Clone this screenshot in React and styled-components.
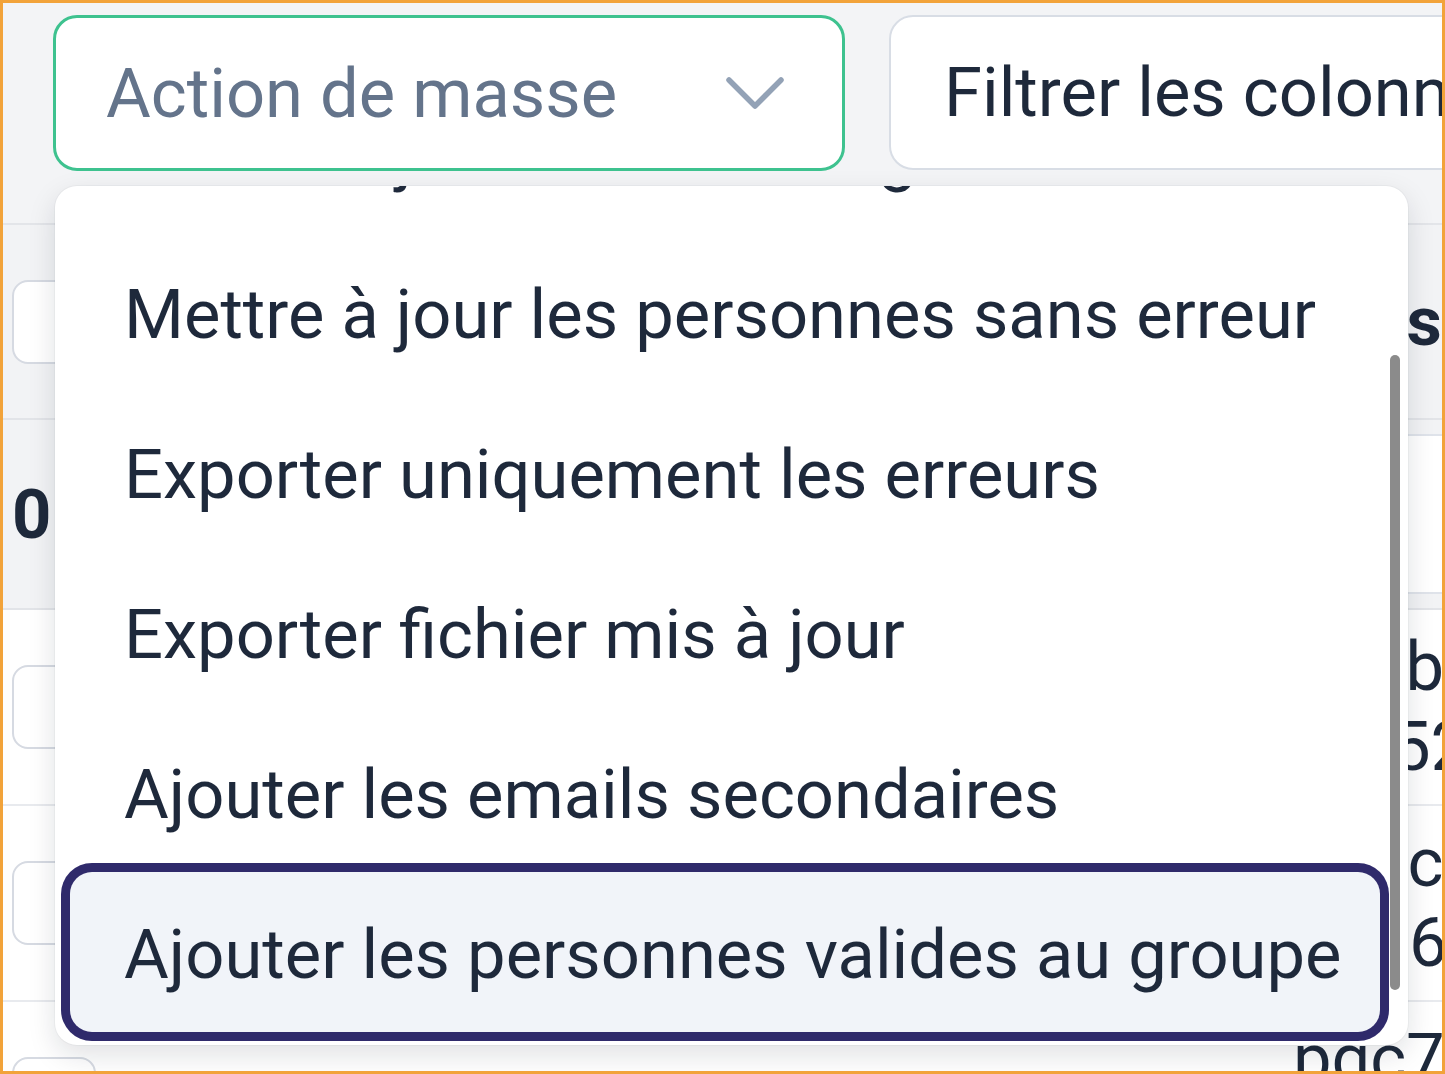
import React, { useLayoutEffect, useRef } from 'react';
import styled, { createGlobalStyle } from 'styled-components';

const GlobalStyle = createGlobalStyle`
  html, body {
    margin: 0;
    padding: 0;
  }
  body {
    font-family: Roboto, "Liberation Sans", sans-serif;
    background: #ffffff;
  }
`;

const Frame = styled.div`
  position: relative;
  width: 1445px;
  height: 1074px;
  box-sizing: border-box;
  border: 3px solid #f2a33a;
  background: #f3f4f6;
  overflow: hidden;
`;

const Toolbar = styled.div`
  display: flex;
  align-items: flex-start;
  gap: 44px;
  height: 222px;
  box-sizing: border-box;
  padding: 12px 0 0 50px;
  border-bottom: 2px solid #e3e5e9;
`;

const SelectBox = styled.div`
  flex: 0 0 auto;
  width: 792px;
  height: 156px;
  box-sizing: border-box;
  display: flex;
  align-items: center;
  justify-content: space-between;
  padding: 0 56px 0 50px;
  background: #ffffff;
  border: 3px solid #3ec28f;
  border-radius: 24px;
  font-size: 68.7px;
  color: #64748b;
  white-space: nowrap;
`;

const FilterBox = styled.div`
  flex: 0 0 auto;
  width: 700px;
  height: 155px;
  box-sizing: border-box;
  display: flex;
  align-items: center;
  padding-left: 53px;
  background: #ffffff;
  border: 2px solid #d8dde5;
  border-radius: 24px;
  font-size: 68.7px;
  color: #1e293b;
  white-space: nowrap;
  overflow: hidden;
`;

const Table = styled.div`
  display: grid;
  grid-template-columns: 110px 1162px 400px;
  grid-template-rows: 195px 190px;
  grid-auto-rows: 196px;
`;

const Cell = styled.div`
  display: flex;
  align-items: center;
  box-sizing: border-box;
  background: ${(p) => (p.$head ? '#f2f3f5' : '#ffffff')};
  border-bottom: 2px solid ${(p) => (p.$head ? '#e2e4e8' : '#e8eaee')};
  padding-left: ${(p) => p.$pad || 0}px;
  font-size: 68.7px;
  color: #1e293b;
  white-space: pre;
  overflow: hidden;
`;

const Checkbox = styled.span`
  display: block;
  width: 84px;
  height: 84px;
  box-sizing: border-box;
  background: #ffffff;
  border: 2px solid #d6dae2;
  border-radius: 16px;
`;

const BoldText = styled.span`
  font-weight: 700;
  color: #1e293b;
`;

const FilterInput = styled.span`
  display: block;
  width: 100%;
  height: 156px;
  background: #ffffff;
  border-top: 2px solid #dfe3ea;
  border-bottom: 2px solid #dfe3ea;
`;

const IdText = styled.span`
  line-height: 80px;
`;

const Menu = styled.div`
  position: absolute;
  left: 52px;
  top: 183px;
  width: 1353px;
  height: 859px;
  background: #ffffff;
  border-radius: 22px;
  box-shadow: 0 10px 28px rgba(15, 23, 42, 0.13), 0 0 0 1px rgba(15, 23, 42, 0.03);
  overflow: hidden;
`;

const MenuScroll = styled.div`
  height: 100%;
  overflow-y: auto;
  scrollbar-width: none;
  &::-webkit-scrollbar {
    display: none;
  }
`;

const MenuList = styled.div`
  display: flex;
  flex-direction: column;
  padding: 13px 28px 13px 15px;
`;

const MenuItem = styled.div`
  flex: 0 0 auto;
  height: 160px;
  box-sizing: border-box;
  display: flex;
  align-items: center;
  padding: 5px 0 0 54px;
  border-radius: 22px;
  font-size: 68.7px;
  color: #1e293b;
  white-space: nowrap;
  background: ${(p) => (p.$active ? '#f1f4f9' : 'transparent')};
  box-shadow: ${(p) => (p.$active ? '0 0 0 9px #2f2a6b' : 'none')};
`;

const Thumb = styled.div`
  position: absolute;
  top: 169px;
  right: 8px;
  width: 10px;
  height: 635px;
  border-radius: 5px;
  background: #8b8b8b;
`;

const Chevron = () => (
  <svg width="62" height="36" viewBox="0 0 62 36" fill="none">
    <path d="M5 5 L31 31 L57 5" stroke="#93a2b6" strokeWidth="5.5" strokeLinecap="round" strokeLinejoin="round" />
  </svg>
);

const actions = [
  'Mettre à jour toutes les lignes',
  'Mettre à jour les personnes sans erreur',
  'Exporter uniquement les erreurs',
  'Exporter fichier mis à jour',
  'Ajouter les emails secondaires',
  'Ajouter les personnes valides au groupe',
];

const rows = ['a7eb3f\nf0e52c1', '9a4co0d\nb1d6e8', 'pgc7e1\n3a90bd'];

const App = () => {
  const scrollRef = useRef(null);

  useLayoutEffect(() => {
    if (scrollRef.current) {
      scrollRef.current.scrollTop = scrollRef.current.scrollHeight;
    }
  }, []);

  return (
    <>
      <GlobalStyle />
      <Frame>
        <Toolbar>
          <SelectBox>
            <span>Action de masse</span>
            <Chevron />
          </SelectBox>
          <FilterBox>Filtrer les colonnes</FilterBox>
        </Toolbar>

        <Table>
          <Cell $head $pad={9}>
            <Checkbox />
          </Cell>
          <Cell $head />
          <Cell $head $pad={18}>
            <BoldText>Tags</BoldText>
          </Cell>

          <Cell $head $pad={9}>
            <BoldText>0</BoldText>
          </Cell>
          <Cell $head />
          <Cell $head>
            <FilterInput />
          </Cell>

          {rows.map((text, i) => (
            <React.Fragment key={i}>
              <Cell $pad={9}>
                <Checkbox />
              </Cell>
              <Cell />
              <Cell $pad={18}>
                <IdText>{text}</IdText>
              </Cell>
            </React.Fragment>
          ))}
        </Table>

        <Menu>
          <MenuScroll ref={scrollRef}>
            <MenuList>
              {actions.map((label, i) => (
                <MenuItem key={label} $active={i === actions.length - 1}>
                  {label}
                </MenuItem>
              ))}
            </MenuList>
          </MenuScroll>
          <Thumb />
        </Menu>
      </Frame>
    </>
  );
};

export default App;
